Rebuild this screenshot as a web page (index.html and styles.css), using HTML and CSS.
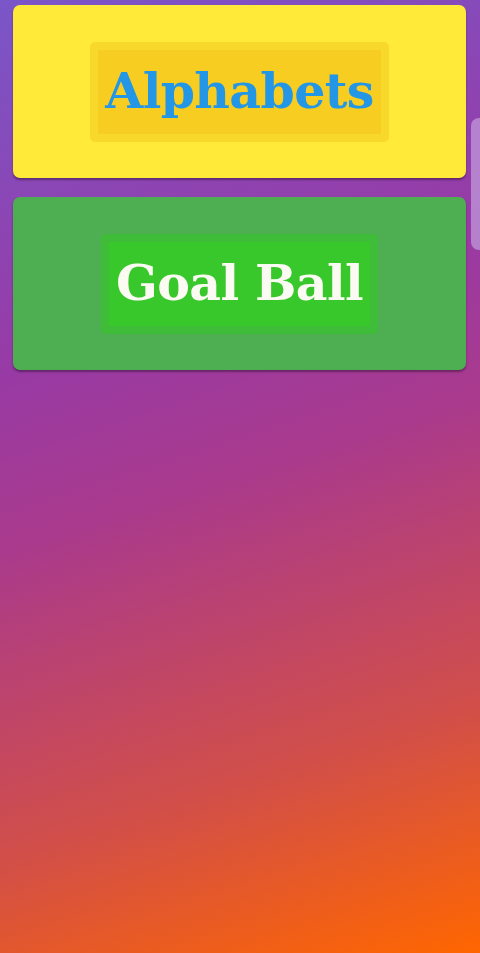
FILE: index.html
```html
<!DOCTYPE html>
<html lang="en">
<head>
<meta charset="utf-8">
<title>Games</title>
<link rel="stylesheet" href="styles.css">
</head>
<body>
<main class="list">
  <div class="card card-yellow">
    <div class="label label-yellow">Alphabets</div>
  </div>
  <div class="card card-green">
    <div class="label label-green">Goal Ball</div>
  </div>
</main>
<div class="edge-glow"></div>
</body>
</html>
```

FILE: styles.css
```css
html, body {
  margin: 0;
  padding: 0;
  height: 100%;
}
body {
  width: 480px;
  min-height: 953px;
  background: linear-gradient(162deg, #7a56c8 0%, #983aa5 34%, #aa3a8c 50%, #d24f48 78%, #ff6600 100%);
  font-family: "DejaVu Serif", "Liberation Serif", serif;
  position: relative;
  overflow: hidden;
}
.list {
  display: flex;
  flex-direction: column;
  gap: 19px;
  padding: 5px 14px 0 13px;
}
.card {
  height: 173px;
  border-radius: 7px;
  display: flex;
  align-items: center;
  justify-content: center;
  box-shadow: 0 2px 2px rgba(40, 10, 40, 0.45);
}
.card-yellow { background: #ffea3a; }
.card-green { background: #4eae52; }
.label {
  box-sizing: border-box;
  height: 100px;
  display: flex;
  align-items: center;
  justify-content: center;
  padding: 0 7px;
  border-radius: 5px;
  border: 8px solid;
  font-weight: bold;
  font-size: 49px;
  letter-spacing: -0.6px;
  line-height: 1;
}
.label-yellow {
  background: #f7cd22;
  border-color: #f9d82c;
  color: #2396e6;
}
.label-green {
  background: #39c82c;
  border-color: #3fbd39;
  color: #fbfbf4;
}
.edge-glow {
  position: absolute;
  right: 0;
  top: 118px;
  width: 9px;
  height: 132px;
  border-radius: 8px 0 0 8px;
  background: #b88ad2;
  opacity: 0.9;
}
```
